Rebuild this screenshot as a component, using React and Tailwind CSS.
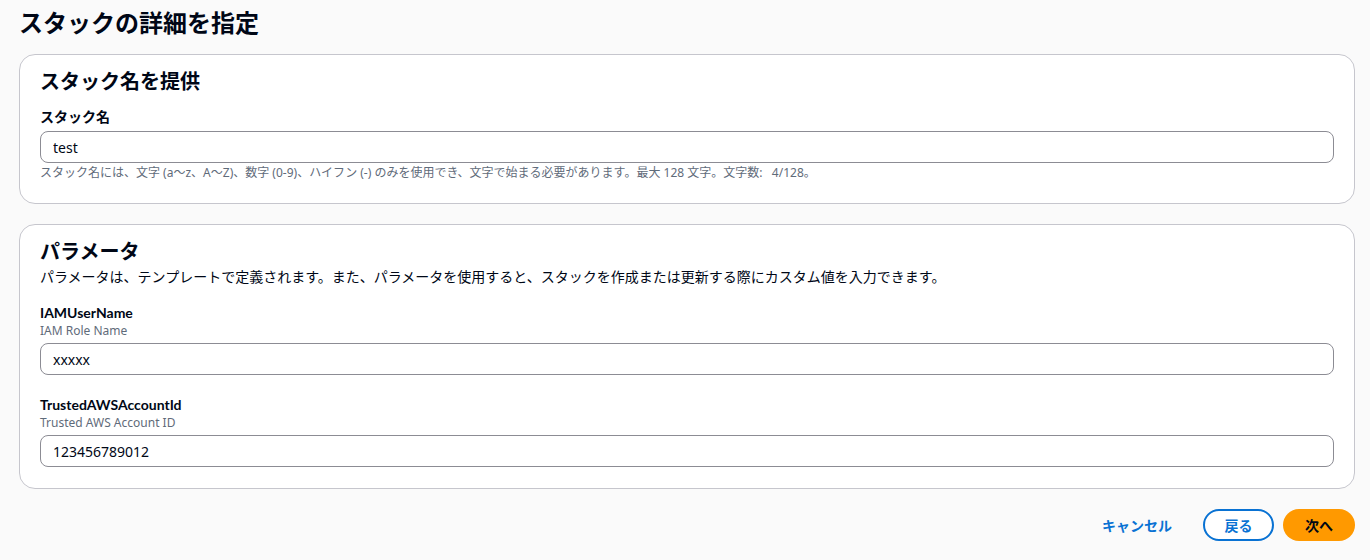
import React, { useState } from 'react';

const FONT = { fontFamily: '"Noto Sans", "Noto Sans CJK JP", sans-serif' };
const LABEL_FONT = { fontFamily: 'Lato, "Noto Sans CJK JP", sans-serif' };

function Field({ label, desc, value, onChange, className = '' }) {
  return (
    <div className={className}>
      <div style={LABEL_FONT} className="text-[14px] leading-[20px] font-bold text-[#000716]">{label}</div>
      {desc && <div className="text-[12px] leading-[16px] text-[#5f6b7a]">{desc}</div>}
      <input
        value={value}
        onChange={onChange}
        className="mt-[4px] block w-full h-[32px] px-[12px] text-[14px] text-[#000716] bg-white border border-[#8c8c94] rounded-[8px] outline-none"
      />
    </div>
  );
}

export default function App() {
  const [form, setForm] = useState({ stack: 'test', user: 'xxxxx', account: '123456789012' });
  const set = (k) => (e) => setForm(prev => ({ ...prev, [k]: e.target.value }));

  return (
    <div style={FONT} className="min-h-[560px] bg-[#fafafa] pl-[19px] pr-[15px] pt-[8px] text-[#000716]">
      <h1 className="text-[24px] leading-[30px] font-bold mb-[16px]">スタックの詳細を指定</h1>

      <section className="bg-white border border-[#c6c6cd] rounded-[16px] px-[20px] pt-[15px] pb-[22px]">
        <h2 className="text-[20px] leading-[24px] font-bold">スタック名を提供</h2>
        <div className="mt-[12px]">
          <div className="text-[14px] leading-[22px] font-bold">スタック名</div>
          <input
            value={form.stack}
            onChange={set('stack')}
            className="mt-[3px] block w-full h-[32px] px-[12px] text-[14px] bg-white border border-[#8c8c94] rounded-[8px] outline-none"
          />
          <div className="mt-[2px] text-[12px] leading-[16px] text-[#5f6b7a]">
            スタック名には、文字 (a〜z、A〜Z)、数字 (0-9)、ハイフン (-) のみを使用でき、文字で始まる必要があります。最大 128 文字。文字数:&nbsp;&nbsp; {form.stack.length}/128。
          </div>
        </div>
      </section>

      <section className="mt-[20px] bg-white border border-[#c6c6cd] rounded-[16px] px-[20px] pt-[15px] pb-[21px]">
        <h2 className="text-[20px] leading-[24px] font-bold">パラメータ</h2>
        <p className="mt-[3px] text-[14px] leading-[20px] text-[#000716]">
          パラメータは、テンプレートで定義されます。また、パラメータを使用すると、スタックを作成または更新する際にカスタム値を入力できます。
        </p>
        <Field className="mt-[16px]" label="IAMUserName" desc="IAM Role Name" value={form.user} onChange={set('user')} />
        <Field className="mt-[20px]" label="TrustedAWSAccountId" desc="Trusted AWS Account ID" value={form.account} onChange={set('account')} />
      </section>

      <div className="mt-[20px] flex justify-end items-center">
        <button className="h-[32px] px-[20px] text-[14px] font-bold text-[#0972d3]">キャンセル</button>
        <button className="ml-[11px] h-[32px] w-[71px] rounded-full border-2 border-[#0972d3] bg-white text-[14px] font-bold text-[#0972d3]">戻る</button>
        <button className="ml-[9px] h-[32px] w-[72px] rounded-full bg-[#ff9900] text-[14px] font-bold text-[#000716]">次へ</button>
      </div>
    </div>
  );
}
